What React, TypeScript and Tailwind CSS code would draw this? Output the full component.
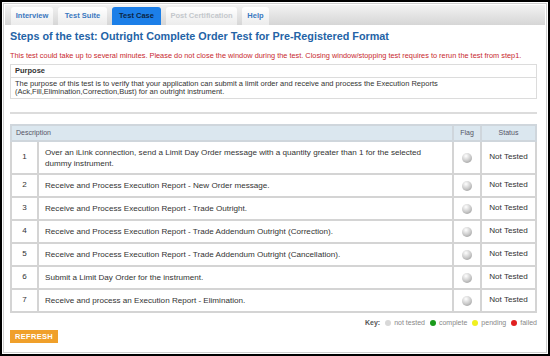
const steps = [
  "Over an iLink connection, send a Limit Day Order message with a quantity greater than 1 for the selected dummy instrument.",
  "Receive and Process Execution Report - New Order message.",
  "Receive and Process Execution Report - Trade Outright.",
  "Receive and Process Execution Report - Trade Addendum Outright (Correction).",
  "Receive and Process Execution Report - Trade Addendum Outright (Cancellation).",
  "Submit a Limit Day Order for the instrument.",
  "Receive and process an Execution Report - Elimination.",
];

const tabs = [
  { label: "Interview", w: "w-[42px]", state: "normal" },
  { label: "Test Suite", w: "w-[49px]", state: "normal" },
  { label: "Test Case", w: "w-[49px]", state: "active" },
  { label: "Post Certification", w: "w-[71px]", state: "disabled" },
  { label: "Help", w: "w-[27px]", state: "normal" },
];

function Tab({ label, w, state }: { label: string; w: string; state: string }) {
  let cls = "bg-gradient-to-b from-white to-[#ececec] text-[#3a78c0]";
  if (state === "active") cls = "bg-[#1c7fe8] text-[#0b2545]";
  if (state === "disabled") cls = "bg-gradient-to-b from-white to-[#ececec] text-[#c4c8cc]";
  return (
    <div className={`${w} ${cls} h-[18px] rounded-t-[3px] flex items-center justify-center text-[7.5px] font-bold`}>
      {label}
    </div>
  );
}

function Flag() {
  return (
    <div className="w-[10px] h-[10px] rounded-full mx-auto bg-[radial-gradient(circle_at_40%_30%,#ffffff,#c8c8c8_55%,#8a8a8a)]" />
  );
}

function Dot({ color }: { color: string }) {
  return <span className={`inline-block w-[6px] h-[6px] rounded-full ${color} mr-[3px] ml-[5px]`} />;
}

export default function App() {
  return (
    <div className="w-[550px] h-[356px] bg-white border-2 border-black p-px font-['Liberation_Sans',Arial,sans-serif]">
      <div className="h-full border border-[#cfcfcf] px-px pt-px">
        <div className="h-[20px] bg-gradient-to-b from-[#f2f2f2] to-[#d6d6d6] flex items-end gap-[5px] pl-[6px]">
          {tabs.map((t) => (
            <Tab key={t.label} {...t} />
          ))}
        </div>
        <div className="px-[5px]">
          <h1 className="text-[10.8px] font-bold text-[#2463a6] mt-[4px] leading-[14px]">
            Steps of the test: Outright Complete Order Test for Pre-Registered Format
          </h1>
          <p className="text-[7.37px] text-[#c8282e] mt-[8px] leading-[10px] whitespace-nowrap">
            This test could take up to several minutes. Please do not close the window during the test. Closing window/stopping test requires to rerun the test from step1.
          </p>
          <div className="mt-[3px] w-[527px] border border-[#dcdcdc]">
            <div className="h-[13px] border-b border-[#dcdcdc] px-[4px] text-[7.5px] font-bold text-[#333] flex items-center">
              Purpose
            </div>
            <div className="px-[4px] py-[2px] text-[7.5px] leading-[8px] text-[#333] h-[20px]">
              The purpose of this test is to verify that your application can submit a limit order and receive and process the Execution Reports (Ack,Fill,Elimination,Correction,Bust) for an outright instrument.
            </div>
          </div>
          <div className="mt-[13px] w-[527px] h-[2px] bg-[#dcdcdc]" />
          <table className="mt-[10px] w-[527px] border-collapse text-[8.1px] text-[#333]">
            <thead>
              <tr className="h-[16px] bg-[#dbe7ef] text-[7px] text-[#556]">
                <th colSpan={2} className="border-2 border-[#cfd6dc] text-left font-normal px-[4px]">
                  Description
                </th>
                <th className="w-[28px] border-2 border-[#cfd6dc] font-normal">Flag</th>
                <th className="w-[55px] border-2 border-[#cfd6dc] font-normal">Status</th>
              </tr>
            </thead>
            <tbody>
              {steps.map((s, i) => (
                <tr key={i} className={i === 0 ? "h-[33px]" : "h-[23px]"}>
                  <td className="w-[27px] border-2 border-[#d4d4d4] text-center">{i + 1}</td>
                  <td className="border-2 border-[#d4d4d4] pl-[6px] pr-[4px] leading-[11px]">{s}</td>
                  <td className="border-2 border-[#d4d4d4]">
                    <Flag />
                  </td>
                  <td className="border-2 border-[#d4d4d4] text-center">Not Tested</td>
                </tr>
              ))}
            </tbody>
          </table>
          <div className="w-[527px] flex justify-end items-center text-[7px] text-[#888] mt-[5px] h-[10px]">
            <span className="font-bold text-[#555]">Key:</span>
            <Dot color="bg-[#d8d8d8]" />
            not tested
            <Dot color="bg-[#1a9a1a]" />
            complete
            <Dot color="bg-[#f0f020]" />
            pending
            <Dot color="bg-[#e02020]" />
            failed
          </div>
          <div className="mt-[2px] w-[48px] h-[13px] bg-[#f0a02a] text-white text-[7.5px] font-bold flex items-center justify-center tracking-[0.3px]">
            REFRESH
          </div>
        </div>
      </div>
    </div>
  );
}
